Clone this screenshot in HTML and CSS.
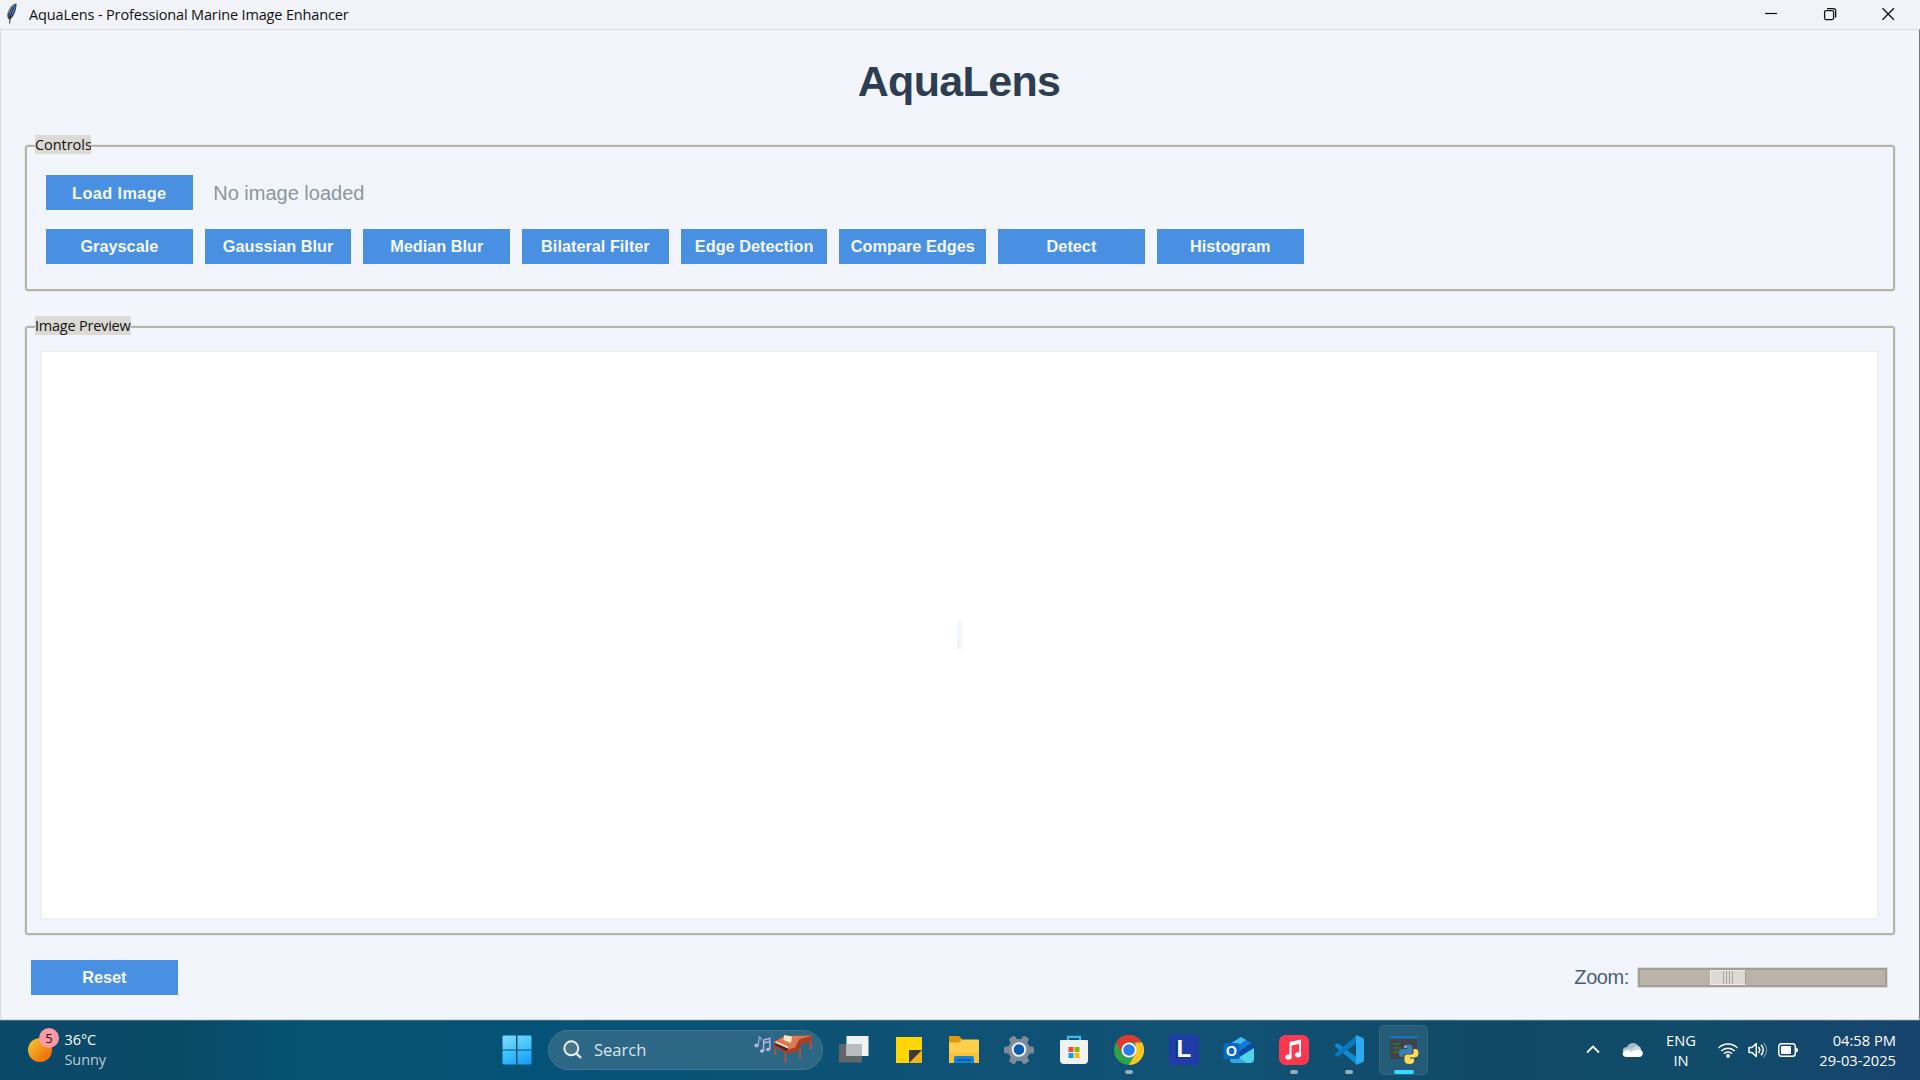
FILE: index.html
```html
<!DOCTYPE html>
<html lang="en">
<head>
<meta charset="utf-8">
<title>AquaLens - Professional Marine Image Enhancer</title>
<link rel="stylesheet" href="styles.css">
</head>
<body>
<div class="window">
  <header class="titlebar">
    <svg class="feather" width="12" height="21" viewBox="0 0 12 21"><path d="M10.6.6C6 1 1.800 6 1.300 12.500c0 2 .8 3.500 2 4.200 4-1.700 7-8 7.300-16.100Z" fill="#3d4350"/><path d="M9.300 3C7 3.500 3.800 8 3.600 13.500 7 12 9 8 9.300 3Z" fill="#4387d8"/><path d="M8.300 4.500C5.500 8 4.200 13 3.600 20.500" stroke="#1e2633" fill="none"/><path d="M2.500 10C4 5 6 3 8.500 1.800" stroke="#a9afba" fill="none"/></svg>
    <span class="titlebar-text">AquaLens - Professional Marine Image Enhancer</span>
    <div class="caption-buttons">
      <svg width="58" height="28"><path d="M22 13.500h12" stroke="#111" stroke-width="1.200"/></svg>
      <svg width="58" height="28"><rect x="22.600" y="10.600" width="9" height="9" rx="1.500" fill="none" stroke="#111" stroke-width="1.300"/><path d="M25 8.600h6.500a2.200 2.200 0 0 1 2.200 2.200v6.800" fill="none" stroke="#111" stroke-width="1.300"/></svg>
      <svg width="58" height="28"><path d="M22.500 8.300l11.400 11.400M33.900 8.300L22.500 19.700" stroke="#111" stroke-width="1.300"/></svg>
    </div>
  </header>
  <main class="client">
    <h1 class="heading">AquaLens</h1>
    <section class="frame controls">
      <h2 class="frame-label label-controls">Controls</h2>
      <div class="row">
        <button class="btn btn-load">Load Image</button>
        <span class="status">No image loaded</span>
      </div>
      <div class="row">
        <button class="btn">Grayscale</button>
        <button class="btn">Gaussian Blur</button>
        <button class="btn">Median Blur</button>
        <button class="btn">Bilateral Filter</button>
        <button class="btn">Edge Detection</button>
        <button class="btn">Compare Edges</button>
        <button class="btn">Detect</button>
        <button class="btn">Histogram</button>
      </div>
    </section>
    <section class="frame preview">
      <h2 class="frame-label label-preview">Image Preview</h2>
      <div class="canvas"><div class="empty-image"></div></div>
    </section>
    <footer class="bottom">
      <button class="btn">Reset</button>
      <div class="zoom">
        <span class="zoom-label">Zoom:</span>
        <div class="trough"><div class="thumb"><i></i><i></i><i></i><i></i></div></div>
      </div>
    </footer>
  </main>
</div>
<nav class="taskbar">
  <div class="weather">
    <div class="sun"><span class="badge">5</span></div>
    <div class="weather-text"><span>36°C</span><span class="dim">Sunny</span></div>
  </div>
  <div class="apps">
    <div class="app">
      <svg width="30" height="30" viewBox="0 0 30 30"><defs><linearGradient id="win" x1="0" y1="0" x2="1" y2="1" gradientUnits="objectBoundingBox"><stop offset="0" stop-color="#7fdcff"/><stop offset="1" stop-color="#34bdf8"/></linearGradient><linearGradient id="win2" x1="0" y1="0" x2="1" y2="1"><stop offset="0" stop-color="#48ccff"/><stop offset="1" stop-color="#1298f8"/></linearGradient></defs><path d="M1.500.5H14v14H.5v-13zM15.500.5h13l1 1v13h-14z" fill="url(#win)"/><path d="M.5 15.500H14v14H1.500l-1-1zM15.500 15.500h14v13l-1 1h-13z" fill="url(#win2)"/></svg>
    </div>
    <div class="search">
      <svg class="lens" width="20" height="20" viewBox="0 0 20 20"><circle cx="8.300" cy="8.300" r="7" fill="#4a7388" stroke="#e8eef2" stroke-width="2"/><path d="M13.300 13.300l4.700 4.700" stroke="#e8eef2" stroke-width="2.400"/></svg>
      <span class="search-text">Search</span>
      <svg class="piano" width="60" height="32" viewBox="0 0 60 32"><g fill="#b9b5ea" stroke="#b9b5ea"><ellipse cx="3.500" cy="11.500" rx="1.800" ry="1.500"/><path d="M5.200 11.500L6.300 2.500q2 .5 2 4" fill="none"/><ellipse cx="9" cy="17" rx="1.600" ry="1.300"/><ellipse cx="15" cy="15.500" rx="1.600" ry="1.300"/><path d="M10.600 17V6l6.300-1.700v11M10.600 9l6-1.500" fill="none" stroke-width="1.400"/></g><path d="M22.500 12v9M32.500 18v11M47 14v11M58 5v11" stroke="#b75437" stroke-width="1.700"/><path d="M21 8l11-6 27-.5-.5 6.500-10.500 3-3 6-9 3-15-7z" fill="#a64028"/><path d="M21 8l11-6 27-.5-13 4-4 8-7 2-13-6z" fill="#df7951"/><path d="M22 8.500l13 6-1 2.500-12-6z" fill="#362d33"/><path d="M22.500 8l12.500 5.500" stroke="#f6ddc0" stroke-width="1.700"/><path d="M31 1l8 1.500-1 6.500-7.500-3z" fill="#f6e6bd"/></svg>
    </div>
    <div class="app"><svg width="32" height="30" viewBox="0 0 32 30"><path d="M1 9h23v18.500H1z" fill="#61666b"/><path d="M8.500 1h22v20h-22z" fill="#f1f2f4"/><path d="M8.500 9H24v12H8.500z" fill="#b9bdc0"/></svg></div>
    <div class="app"><svg width="28" height="28" viewBox="0 0 28 28"><path d="M1 1h26v14L14 27H1z" fill="#ffd602"/><path d="M14 14h13v13H14z" fill="#f5b51d"/><path d="M14 14h13L14 27z" fill="#3e3a35"/></svg></div>
    <div class="app"><svg width="32" height="30" viewBox="0 0 32 30"><path d="M1 2q0-1 1-1h9l3 3v8H1z" fill="#dc9a0c"/><path d="M1 7.500l10 0 3-3h16q1 0 1 1V28H1z" fill="#ffce4b"/><path d="M1 18h30v10H1z" fill="#f9c23b"/><path d="M6 28v-5q0-2 2-2h16q2 0 2 2v5z" fill="#1282d5"/><path d="M9 25h14" stroke="#075394" stroke-width="1.500"/></svg></div>
    <div class="app"><svg width="30" height="30" viewBox="0 0 30 30"><g fill="#7f8c98"><circle cx="15" cy="15" r="11"/><rect x="0" y="11.500" width="30" height="7" rx="2"/><rect x="0" y="11.500" width="30" height="7" rx="2" transform="rotate(60 15 15)"/><rect x="0" y="11.500" width="30" height="7" rx="2" transform="rotate(120 15 15)"/></g><circle cx="15" cy="14.500" r="6.300" fill="#0d59ad" stroke="#eef3f7" stroke-width="2"/></svg></div>
    <div class="app"><svg width="30" height="30" viewBox="0 0 30 30"><path d="M9 6V1.800h12V6" fill="none" stroke="#36bdf2" stroke-width="2.200"/><path d="M1 6q0-1 1-1h26q1 0 1 1v19q0 4-4 4H5q-4 0-4-4z" fill="#f1f1f2"/><path d="M9.500 12h5v5h-5z" fill="#f05022"/><path d="M15.500 12h5v5h-5z" fill="#7fba00"/><path d="M9.500 18h5v5h-5z" fill="#00a4ef"/><path d="M15.500 18h5v5h-5z" fill="#ffb900"/></svg></div>
    <div class="app running"><svg width="30" height="30" viewBox="0 0 30 30"><circle cx="15" cy="15" r="15" fill="#2fa24c"/><path d="M2 7.500A15 15 0 0 1 28 7.500H15L8.500 18.800z" fill="#e1392d"/><path d="M28 7.500A15 15 0 0 1 15 30l6.500-11.200L21.500 7.500z" fill="#fcc524"/><circle cx="15" cy="15" r="7.500" fill="#fff"/><circle cx="15" cy="15" r="5.800" fill="#2a7bec"/></svg></div>
    <div class="app"><div class="tile-l">L</div></div>
    <div class="app"><svg width="32" height="28" viewBox="0 0 32 28"><path d="M7 8L18 1l10 6v17H7z" fill="#1490df"/><path d="M7 8L18 1l5 3L9 14z" fill="#45bdf0"/><path d="M28 6.500l3 4.500v2L17 22l-3-6z" fill="#0b4aa5"/><path d="M23 4l5 3-13 9-3-4z" fill="#1679cf"/><path d="M31 12v11q0 4-4 4H13l2-5z" fill="#50d4ee"/><path d="M7 22l8-1 9 6H10q-3 0-3-3z" fill="#32a9dd"/><rect x=".5" y="7" width="16" height="16" rx="1.500" fill="#0869c4"/><text x="8.500" y="20" text-anchor="middle" class="outlook-o">O</text></svg></div>
    <div class="app running"><svg width="30" height="30" viewBox="0 0 30 30"><rect width="30" height="30" rx="6.500" fill="#fc3850"/><g fill="#fff"><path d="M10.500 7L22 4.600v4L12.500 10.600V22h-2zM20 7h2v12.500h-2z"/><ellipse cx="9.500" cy="22" rx="3.200" ry="2.600"/><ellipse cx="19" cy="19.800" rx="3.200" ry="2.600"/></g></svg></div>
    <div class="app running"><svg width="30" height="30" viewBox="0 0 30 30"><path d="M1.500 9.500l2-1.500L22.500 22v7.500L1 11.300q-.5-1 .5-1.800z" fill="#138bd3"/><path d="M1.500 20.500l2 1.500L22.500 8V.5L1 18.700q-.5 1 .5 1.800z" fill="#0879bf"/><path d="M22 0l7 3q1 .5 1 1.500v21q0 1-1 1.500l-7 3z" fill="#2da9ef"/></svg></div>
    <div class="app running active"><svg width="30" height="30" viewBox="0 0 30 30"><path d="M1 1h27v23H1z" fill="#404448"/><path d="M1 1h27v2.600H1z" fill="#1374bf"/><path d="M4 9h7M4 13h8M4 17h5" stroke="#2b7a32" stroke-width="1.500"/><path d="M14.500 12q0-2.500 4.500-2.500t4.500 2.500v5q0 2-2 2h-5q-2.500 0-2.500 3h-1.500Q10 22 10 18t3.500-4h5v-1h-4z" fill="#3b7fb5"/><path d="M24.500 14H26q3.500 0 3.500 4t-3.500 4.500h-5v1h4v2.500q0 3-4.500 3T15.500 26v-4q0-2.500 2.500-2.500h4q2.500 0 2.500-2.500z" fill="#fadb55"/><circle cx="16.500" cy="11.700" r=".8" fill="#fff"/><circle cx="22.500" cy="26.500" r=".8" fill="#fff"/></svg></div>
  </div>
  <div class="tray">
    <svg class="chevron" width="14" height="9"><path d="M1 7.500l6-6 6 6" fill="none" stroke="#fff" stroke-width="1.800"/></svg>
    <svg class="cloud" width="21" height="14" viewBox="0 0 21 14"><path d="M3 11Q0 9 1 6q1-2 4-2 2-4 6-4 4 0 6 4l-6 8z" fill="#a5bac4"/><path d="M1 9q4-5 8-3 3-3 6-3 4 0 4 4 2 1 1.500 4-.5 3-3.500 3H5q-4 0-4.500-3z" fill="#c5d3da"/><path d="M1 10q3-5 8-1l4-2q4-1 7 1 1.500 3-.5 5l-2 1H5q-4 0-4-4z" fill="#fff"/></svg>
    <div class="lang"><span>ENG</span><span>IN</span></div>
    <svg class="wifi" width="20" height="16" viewBox="0 0 20 16"><g fill="none" stroke="#fff" stroke-width="1.500"><path d="M.6 6a13.300 13.300 0 0 1 18.800 0M3.300 9a9.500 9.500 0 0 1 13.400 0M6 11.700a5.600 5.600 0 0 1 8 0"/></g><circle cx="10" cy="14" r="1.900" fill="#fff"/></svg>
    <svg class="volume" width="20" height="16" viewBox="0 0 20 16"><path d="M1 5.500h3L8.300 1.500v13L4 10.500H1z" fill="none" stroke="#fff" stroke-width="1.500" stroke-linejoin="round"/><path d="M10.500 5q2.500 3 0 6M13 2.800q4.500 5.200 0 10.400" fill="none" stroke="#fff" stroke-width="1.500"/><path d="M15.500.7q6.500 7.300 0 14.600" fill="none" stroke="#6c8da0" stroke-width="1.300"/></svg>
    <svg class="battery" width="21" height="14" viewBox="0 0 21 14"><rect x=".8" y=".8" width="16.500" height="12.400" rx="2.800" fill="none" stroke="#fff" stroke-width="1.500"/><rect x="3" y="3" width="10" height="8" rx="1" fill="#fff"/><path d="M18 4.500q2.200.5 2.200 2.500t-2.200 2.500z" fill="#fff"/></svg>
    <div class="clock"><span>04:58 PM</span><span>29-03-2025</span></div>
  </div>
</nav>
</body>
</html>
```
FILE: styles.css
```css
* { box-sizing: border-box; }

body {
  margin: 0;
  width: 1920px;
  height: 1080px;
  overflow: hidden;
  display: flex;
  flex-direction: column;
  font-family: "Open Sans", "Noto Sans", sans-serif;
}

svg { display: block; flex: none; }

/* Application window */
.window {
  height: 1020px;
  display: flex;
  flex-direction: column;
  background: #f2f5fc;
}

.titlebar {
  height: 29px;
  flex: none;
  display: flex;
  align-items: center;
  padding-left: 6px;
  background: #f1f3f8;
  color: #111;
}

.feather { margin-top: -2px; }
.titlebar-text { margin-left: 11px; font-size: 14.500px; letter-spacing: -0.150px; white-space: nowrap; }
.caption-buttons { display: flex; margin: 0 2px 1px auto; gap: 0.500px; }

.client {
  flex: 1;
  display: flex;
  flex-direction: column;
  padding: 20px 24px 0;
  border: 1px solid #d9dbe0;
  border-right-color: #777a80;
}

.heading {
  margin: 0 2px 0 0;
  height: 64px;
  text-align: center;
  font: bold 43px/63px "Liberation Sans", Arial, sans-serif;
  letter-spacing: -0.650px;
  color: #2c3e50;
}

.frame {
  position: relative;
  flex: none;
  border: 2px solid #b8b5ab;
  border-radius: 3px;
  box-shadow: 0 0 0 0.500px #dedcd6;
}

.frame-label {
  position: absolute;
  left: 8px;
  top: -12px;
  margin: 0;
  height: 19px;
  line-height: 19px;
  overflow: hidden;
  background: #dcdad5;
  color: #111;
  font-size: 14.500px;
  font-weight: 400;
  white-space: nowrap;
}

.label-controls { width: 56px; letter-spacing: -0.050px; }
.label-preview { width: 96px; letter-spacing: -0.220px; }

.controls {
  height: 146px;
  margin-top: 31px;
  padding: 28px 19px;
  display: flex;
  flex-direction: column;
  gap: 18.500px;
}

.row { display: flex; align-items: center; gap: 12px; }

.btn {
  width: 146.700px;
  height: 35.300px;
  flex: none;
  padding: 0;
  border: 0;
  background: #4a90e2;
  color: #f4f8ff;
  font: bold 16.300px/35px "Liberation Sans", Arial, sans-serif;
  white-space: nowrap;
}

.btn-load { padding-top: 1px; letter-spacing: 0.400px; }

.status {
  margin-left: 8.500px;
  padding-top: 1px;
  font: 20px/34.300px "Liberation Sans", Arial, sans-serif;
  color: #8b979a;
}

.preview { height: 609px; margin-top: 35px; padding: 22px 14px 13px 13px; }

.canvas {
  height: 100%;
  display: grid;
  place-items: center;
  background: #fff;
  border: 2px solid #f0f0f0;
}

.empty-image { width: 5px; height: 28px; background: #f1f5fc; }

.bottom {
  display: flex;
  align-items: center;
  justify-content: space-between;
  padding: 0 8px 0 6px;
  margin-top: 25px;
}

.zoom { display: flex; align-items: center; }
.zoom-label { font: 20px/35px "Liberation Sans", Arial, sans-serif; color: #4b5f73; letter-spacing: -0.400px; }

.trough {
  width: 249px;
  height: 19px;
  margin-left: 9px;
  padding-left: 70px;
  background: #b9b4a9;
  border: 2px solid #a49f94;
  box-shadow: 0 0 0 1px #dddbd5;
}

.thumb {
  width: 36px;
  height: 15px;
  display: flex;
  align-items: center;
  justify-content: center;
  gap: 2px;
  background: #dcdad5;
  border: 1px solid #eeebe7;
  border-right-color: #a49f94;
}

.thumb i { width: 1px; height: 13px; background: #aaa59b; }

/* Taskbar */
.taskbar {
  height: 60px;
  display: flex;
  align-items: center;
  padding-bottom: 2px;
  color: #fff;
  border-top: 1px solid #456d80;
  background: linear-gradient(90deg, #0b4968 0, #094a67 180px, #065271 300px, #055278 540px, #0d5275 850px, #115174 1250px, #0f4966 1480px, #104b69 1700px, #17446e 1900px);
}

.weather { width: 489.500px; display: flex; padding-left: 28px; }

.sun {
  position: relative;
  width: 24px;
  height: 24px;
  margin-top: 8px;
  border-radius: 50%;
  background: linear-gradient(135deg, #f3bc2b 15%, #f2750c 75%);
}

.badge {
  position: absolute;
  left: 11px;
  top: -10px;
  width: 20px;
  height: 20px;
  border-radius: 50%;
  background: #ff99a4;
  color: #241318;
  font-size: 13px;
  line-height: 20px;
  text-align: center;
}

.weather-text { display: flex; flex-direction: column; margin-left: 12.500px; font-size: 14.500px; letter-spacing: -0.100px; line-height: 20px; }
.dim { color: #bdccd5; }

.apps { display: flex; align-items: center; }

.app {
  position: relative;
  width: 55.040px;
  height: 50px;
  display: flex;
  align-items: center;
  justify-content: center;
  flex: none;
}

.active::before {
  content: "";
  position: absolute;
  inset: 0 3px;
  background: rgba(255, 255, 255, 0.090);
  border: 1px solid rgba(255, 255, 255, 0.070);
  border-radius: 5px;
}

/* Keeps the glyph above the highlighted tile */
.active svg { position: relative; }

.running::after {
  content: "";
  position: absolute;
  bottom: 1px;
  width: 8px;
  height: 4px;
  border-radius: 2px;
  background: #93adbc;
}

.active::after { width: 20px; background: #35dcff; }

.search {
  width: 275px;
  height: 40px;
  margin: 0 3px 0 3.500px;
  display: flex;
  align-items: center;
  padding: 0 9px 0 14px;
  border-radius: 20px;
  border: 1px solid #447790;
  background: #2d6786;
}

.search-text { margin-left: 11px; font-size: 16.500px; color: #dbe6ec; }
.piano { margin-left: auto; }

.tile-l {
  width: 30px;
  height: 30px;
  background: #203ca8;
  color: #fff;
  font: bold 24px/28px "Liberation Sans", Arial, sans-serif;
  text-align: center;
  text-shadow: -2px 1px #123070;
}

.outlook-o { font: bold 14px "Liberation Sans", Arial, sans-serif; fill: #fff; }

.tray { display: flex; align-items: center; margin-left: auto; padding-right: 24px; font-size: 14.700px; line-height: 20px; }
.cloud { margin-left: 22px; }
.lang { width: 30px; margin-left: 23px; display: flex; flex-direction: column; align-items: center; }
.wifi { margin-left: 22px; }
.volume { margin-left: 10px; }
.battery { margin-left: 10px; }
.clock { width: 78px; margin-left: 19px; display: flex; flex-direction: column; align-items: flex-end; white-space: nowrap; }
```
